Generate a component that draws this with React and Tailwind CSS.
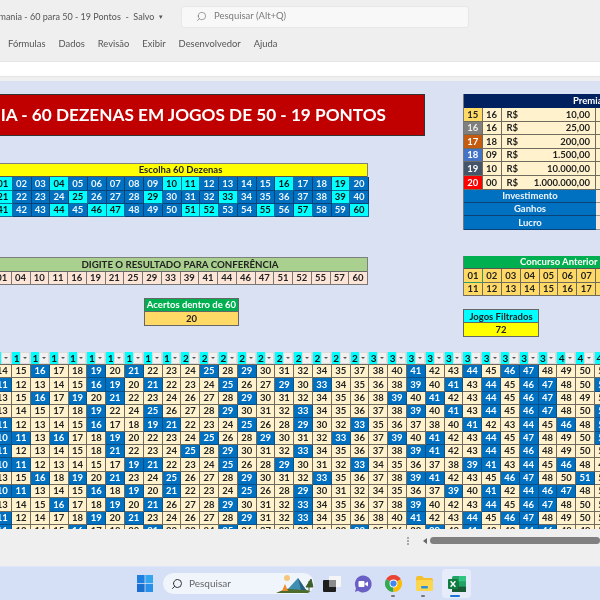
import React from "react";
import { Search } from "lucide-react";

const RESULT = [1,4,10,11,16,19,21,25,29,33,39,41,44,46,47,51,52,55,57,60];
const pad = (n) => String(n).padStart(2, "0");
const ROWS = [
  [14,15,16,17,18,19,20,21,22,23,24,25,28,29,30,31,32,34,35,37,38,40,41,42,43,44,45,46,47,48,49,50,50],
  [11,12,13,14,15,16,19,20,21,22,23,24,25,26,27,29,30,33,34,35,36,38,39,40,41,43,44,45,46,47,48,50,51],
  [13,15,16,17,19,20,21,22,23,24,26,27,28,29,30,31,32,34,35,36,38,39,40,41,42,43,44,45,46,47,48,49,50],
  [13,14,15,17,18,19,22,24,25,26,27,28,29,30,31,32,33,34,35,36,37,38,39,40,41,43,44,45,46,47,48,50,51],
  [11,12,13,14,15,16,17,18,19,21,22,23,24,25,26,28,29,30,32,33,35,36,37,38,40,41,42,43,44,45,46,48,51],
  [10,11,13,16,17,18,19,20,22,23,24,25,26,28,29,30,31,32,33,36,37,39,40,41,42,43,44,45,47,48,49,50,51],
  [11,12,13,14,15,18,21,22,23,24,25,28,29,30,31,32,33,34,35,36,37,38,39,41,42,43,44,45,46,48,49,50,53],
  [10,11,12,13,14,15,17,19,21,22,23,24,25,26,28,29,30,31,32,33,34,35,36,37,38,39,41,43,44,45,46,48,49],
  [13,15,16,18,19,20,21,23,24,25,26,27,28,29,30,31,32,33,35,36,37,38,39,41,42,43,45,46,47,48,50,51,53],
  [10,11,13,14,15,16,18,19,20,21,22,23,24,25,26,28,29,30,31,32,34,35,36,37,39,40,41,42,44,46,47,48,50],
  [13,14,15,16,17,18,19,20,21,26,27,28,29,30,31,32,33,34,35,36,37,38,39,40,42,43,44,45,46,47,48,50,53],
  [11,12,14,17,18,19,20,21,23,24,26,27,28,29,31,32,33,34,35,36,38,40,41,42,43,44,45,46,47,48,49,50,53],
  [11,13,14,15,16,17,18,20,21,22,23,24,25,26,27,28,30,31,32,33,35,36,38,39,40,41,42,43,44,46,48,49,50],
];
const HEAD = [null,1,1,1,1,1,1,1,1,1,2,2,2,2,2,2,2,2,2,2,3,3,3,3,3,3,3,3,3,3,4,4,4];
const PRIZES = [
  ["15","16","10,00","bg-[#ffd966] text-[#222]"],
  ["16","16","25,00","bg-[#7f7f7f] text-[#eee]"],
  ["17","18","200,00","bg-[#c55a11] text-white"],
  ["18","09","1.500,00","bg-[#4472c4] text-white"],
  ["19","10","10.000,00","bg-[#44546a] text-white"],
  ["20","00","1.000.000,00","bg-[#ff0000] text-white"],
];

function Num({ n }) {
  const hit = RESULT.includes(n);
  return (
    <div className={`w-[18.8px] h-[13.33px] shrink-0 flex items-center justify-center border-r border-b ${hit ? "bg-[#0070c0] text-white border-[#0b4f86]" : "bg-[#fff2cc] text-[#222] border-[#6f6b5e]"}`}>
      {pad(n)}
    </div>
  );
}

function Pick({ n, on }) {
  return (
    <div className={`w-[18.75px] h-[13.33px] shrink-0 flex items-center justify-center border-r border-b ${on ? "bg-[#00ffff] text-[#111] border-[#0b6f96]" : "bg-[#0070c0] text-[#eef5fb] border-[#0b4175]"}`}>
      {pad(n)}
    </div>
  );
}

function FilterHead({ d }) {
  return (
    <div className="w-[18.8px] h-[12.5px] shrink-0 flex bg-[#00ffff] border-r border-[#c9d4d8] text-[#111] text-[10px]">
      <span className="w-[8px] pl-[1.5px] text-left leading-[12.5px]">{d ?? ""}</span>
      <span className="flex-1 bg-[#f1f1f1] border border-[#dcdcdc] flex items-center justify-center">
        <span className="w-0 h-0 border-l-[2px] border-r-[2px] border-t-[2.5px] border-l-transparent border-r-transparent border-t-[#555]" />
      </span>
    </div>
  );
}

function Excel() {
  return (
    <svg width="18" height="18" viewBox="0 0 18 18">
      <rect x="4" y="1" width="14" height="16" rx="1.5" fill="#21a366" />
      <rect x="11" y="1" width="7" height="5.3" fill="#33c481" />
      <rect x="4" y="6.3" width="7" height="5.3" fill="#107c41" />
      <rect x="11" y="11.6" width="7" height="5.4" fill="#185c37" />
      <rect x="4" y="11.6" width="7" height="5.4" fill="#185c37" />
      <rect x="0" y="4" width="10" height="10" rx="1" fill="#107c41" />
      <path d="M2.6 6.2 L7.4 11.8 M7.4 6.2 L2.6 11.8" stroke="#fff" strokeWidth="1.4" />
    </svg>
  );
}

export default function App() {
  return (
    <div className="w-[600px] h-[600px] overflow-hidden flex flex-col bg-[#efefef] blur-[0.35px] font-[Lato,sans-serif]">
      {/* Title bar */}
      <div className="h-[33px] shrink-0 flex items-center text-[10px] text-[#555]">
        <div className="w-[181px] shrink-0 flex justify-end overflow-hidden whitespace-nowrap pr-[18px] pt-[1px] text-[9px]">
          <span>Lotomania - 60 para 50 - 19 Pontos&nbsp; -&nbsp; Salvo&nbsp; <span className="text-[7px] align-[1px]">▾</span></span>
        </div>
        <div className="w-[288px] h-[22px] bg-[#f8f8f8] border border-[#e7e7e7] rounded-[3px] flex items-center pl-[14px] gap-[7px] text-[#7a7a7a]">
          <Search size={11} strokeWidth={1.3} className="-scale-x-100 text-[#666]" />
          <span className="text-[9.5px]">Pesquisar (Alt+Q)</span>
        </div>
      </div>
      {/* Menu */}
      <div className="h-[28px] shrink-0 flex items-start pl-[8px] pt-[4px] gap-[13px] text-[9.4px] text-[#555] whitespace-nowrap">
        <span>Fórmulas</span><span>Dados</span><span>Revisão</span><span>Exibir</span><span>Desenvolvedor</span><span>Ajuda</span>
      </div>
      {/* Formula bar */}
      <div className="h-[16px] shrink-0 bg-white border-t border-b border-[#e4e4e4]" />
      <div className="h-[4px] shrink-0" />

      {/* Sheet */}
      <div className="h-[448px] shrink-0 bg-[#d9e1f2] overflow-hidden pt-[13px] font-bold text-[9.5px] leading-none">
        <div className="flex h-[257.5px]">
          {/* Left column */}
          <div className="w-[463px] shrink-0 flex flex-col">
            <div className="-ml-[100px] w-[525px] h-[42px] shrink-0 bg-[#c00000] border border-[#333] text-white text-[17.2px] flex items-center justify-end pr-[38px] whitespace-nowrap">
              LOTOMANIA - 60 DEZENAS EM JOGOS DE 50 - 19 PONTOS
            </div>
            <div className="mt-[27px] -ml-[7px] w-[375px] border-t border-l border-r border-[#7f7f7f]">
              <div className="h-[13.33px] bg-[#ffff00] border-b border-[#555] text-[#222] flex items-center justify-center">Escolha 60 Dezenas</div>
              {[0, 1, 2].map((r) => (
                <div key={r} className="flex">
                  {Array.from({ length: 20 }, (_, c) => {
                    const n = r * 20 + c + 1;
                    return <Pick key={n} n={n} on={RESULT.includes(n)} />;
                  })}
                </div>
              ))}
            </div>
            <div className="mt-[40px] -ml-[7px] w-[375px] border-t border-r border-[#7f7f7f]">
              <div className="h-[13.33px] bg-[#a9d08e] border-b border-[#666] text-[#222] text-[9.7px] flex items-center justify-center">DIGITE O RESULTADO PARA CONFERÊNCIA</div>
              <div className="flex">
                {RESULT.map((n) => (
                  <div key={n} className="w-[18.75px] h-[13.33px] shrink-0 bg-[#fce4d6] text-[#222] border-r border-b border-[#777] flex items-center justify-center">{pad(n)}</div>
                ))}
              </div>
            </div>
            <div className="mt-[13px] ml-[144px] w-[95px] border border-[#666]">
              <div className="h-[13px] bg-[#00b050] text-white border-b border-[#666] flex items-center justify-center whitespace-nowrap">Acertos dentro de 60</div>
              <div className="h-[13px] bg-[#ffd966] text-[#222] flex items-center justify-center">20</div>
            </div>
          </div>

          {/* Right column */}
          <div className="w-[137px] shrink-0 flex flex-col overflow-hidden">
            <div className="w-[200px] border-l border-[#777]">
              <div className="h-[14px] bg-[#002060] text-white flex items-center pl-[109px]">Premiações</div>
              {PRIZES.map(([a, b, v, cls]) => (
                <div key={a} className="flex h-[13.6px] bg-[#fff2cc] text-[#222] border-b border-[#6f6b5e]">
                  <div className={`w-[18.5px] border-r border-[#6f6b5e] flex items-center justify-center ${cls}`}>{a}</div>
                  <div className="w-[19px] border-r border-[#6f6b5e] flex items-center justify-center">{b}</div>
                  <div className="w-[94.5px] border-r border-[#6f6b5e] flex items-center justify-between pl-[5px] pr-[5px]">
                    <span>R$</span><span>{v}</span>
                  </div>
                </div>
              ))}
              {["Investimento", "Ganhos", "Lucro"].map((t) => (
                <div key={t} className="flex h-[13.33px]">
                  <div className="w-[132px] bg-[#0070c0] text-[#eef5fb] border-b border-[#0b4175] flex items-center justify-center">{t}</div>
                  <div className="flex-1 bg-[#fce4d6] border-b border-[#999]" />
                </div>
              ))}
            </div>
            <div className="mt-[26.5px] w-[200px] border-l border-[#777]">
              <div className="h-[13.33px] bg-[#00b050] text-white border-b border-[#555] flex items-center pl-[56px]">Concurso Anterior</div>
              {[0, 1].map((r) => (
                <div key={r} className="flex">
                  {Array.from({ length: 8 }, (_, c) => (
                    <div key={c} className={`w-[18.9px] h-[13.5px] shrink-0 bg-[#ffd966] text-[#222] flex items-center justify-center border-r border-b ${r === 0 && c === 0 ? "border-[#2f9a68]" : "border-[#6f6b5e]"}`}>
                      {pad(r * 10 + c + 1)}
                    </div>
                  ))}
                </div>
              ))}
            </div>
            <div className="mt-[13px] w-[76px] border border-[#666]">
              <div className="h-[13px] bg-[#00ffff] text-[#222] border-b border-[#666] flex items-center justify-center whitespace-nowrap">Jogos Filtrados</div>
              <div className="h-[13px] bg-[#ffff00] text-[#222] flex items-center justify-center">72</div>
            </div>
          </div>
        </div>

        {/* Table */}
        <div className="-ml-[6.6px] w-[620px]">
          <div className="flex">
            {HEAD.map((d, i) => <FilterHead key={i} d={d} />)}
          </div>
          <div className="border-t border-[#6f6b5e]">
            {ROWS.map((row, r) => (
              <div key={r} className="flex">
                {row.map((n, c) => <Num key={c} n={n} />)}
              </div>
            ))}
          </div>
        </div>
      </div>

      {/* Sheet footer with scrollbar */}
      <div className="h-[37px] shrink-0 flex items-start pt-[8px] pl-[407px]">
        <div className="w-[2px] h-[8px] border-l-2 border-dotted border-[#aaa]" />
        <div className="ml-[14px] mt-[1px] w-0 h-0 border-y-[3px] border-r-[4px] border-y-transparent border-r-[#666]" />
        <div className="ml-[3px] w-[180px] h-[7px] rounded-full bg-[#808080]" />
      </div>

      {/* Taskbar */}
      <div className="h-[34px] shrink-0 bg-[#d5dff5] border-t border-[#dfe6f5] flex items-center pl-[137px] relative">
        <svg width="16" height="17" viewBox="0 0 16 17" className="shrink-0">
          <rect x="0" y="0" width="7.6" height="8.1" fill="#1f7fe0" />
          <rect x="8.4" y="0" width="7.6" height="8.1" fill="#35a5f0" />
          <rect x="0" y="8.9" width="7.6" height="8.1" fill="#1a6fd0" />
          <rect x="8.4" y="8.9" width="7.6" height="8.1" fill="#2890e8" />
        </svg>
        <div className="ml-[10px] w-[151px] h-[21px] rounded-full bg-[#f0f4fb] flex items-center pl-[8px] gap-[6px] text-[10px] text-[#666] shrink-0 overflow-hidden">
          <Search size={12} strokeWidth={2} className="-scale-x-100 text-[#333] shrink-0" />
          <span className="flex-1">Pesquisar</span>
          <svg width="38" height="21" viewBox="0 0 38 21" className="shrink-0">
            <path d="M0 20 Q12 14 26 15 L38 20 Z" fill="#4d6b2a" />
            <circle cx="11" cy="5" r="3" fill="#f5c77e" />
            <path d="M12 16 L22 5 L30 17 Z" fill="#3f8fb5" />
            <path d="M22 5 L25 17 L30 17 Z" fill="#25607f" />
            <path d="M6 18 L9 11 L12 18 Z" fill="#ee8a2c" />
            <path d="M33 18 L33 8 M30 14 L35 6 L37 14 Z" fill="#3d5f2c" stroke="#3d5f2c" />
          </svg>
        </div>
        <svg width="18" height="16" viewBox="0 0 18 16" className="ml-[9px] shrink-0">
          <rect x="6" y="0" width="12" height="11" rx="1" fill="#f6f6f6" />
          <rect x="0" y="4" width="13" height="12" rx="1" fill="#1d1d1d" />
          <rect x="6" y="4" width="7" height="7" fill="#8b8b8b" />
        </svg>
        <svg width="18" height="18" viewBox="0 0 18 18" className="ml-[13px] shrink-0">
          <path d="M9 0.5 A8.5 8.5 0 1 1 4 15.8 L1 17 L2 13.2 A8.5 8.5 0 0 1 9 0.5 Z" fill="#6a5fc4" />
          <rect x="4.5" y="6" width="6" height="6" rx="1" fill="#fff" />
          <path d="M11 8.5 L14 6.5 V11.5 L11 9.5 Z" fill="#fff" />
        </svg>
        <svg width="17" height="17" viewBox="0 0 24 24" className="ml-[13px] shrink-0">
          <path d="M12 12 L22.4 6 A12 12 0 0 0 1.6 6 Z" fill="#ea4335" />
          <path d="M12 12 L1.6 6 A12 12 0 0 0 12 24 Z" fill="#34a853" />
          <path d="M12 12 L12 24 A12 12 0 0 0 22.4 6 Z" fill="#fbbc05" />
          <circle cx="12" cy="12" r="5.6" fill="#fff" />
          <circle cx="12" cy="12" r="4.4" fill="#4285f4" />
        </svg>
        <svg width="17" height="15" viewBox="0 0 17 15" className="ml-[14px] shrink-0">
          <path d="M0 2 Q0 0 2 0 H6 L8 2 H15 Q17 2 17 4 V13 Q17 15 15 15 H2 Q0 15 0 13 Z" fill="#f5c02c" />
          <rect x="0" y="4" width="17" height="11" rx="1.5" fill="#fdd64f" />
          <rect x="5" y="10" width="7" height="2.5" rx="1" fill="#2a8fd8" />
        </svg>
        <div className="ml-[9px] w-[29px] h-[29px] rounded-[4px] bg-[#e6ecf9] flex items-center justify-center shrink-0">
          <Excel />
        </div>
        <span className="absolute left-[391px] top-[28px] w-[4px] h-[2px] rounded-full bg-[#777]" />
        <span className="absolute left-[421px] top-[28px] w-[4px] h-[2px] rounded-full bg-[#777]" />
        <span className="absolute left-[450px] top-[28px] w-[10px] h-[2px] rounded-full bg-[#1a73d8]" />
      </div>
    </div>
  );
}
